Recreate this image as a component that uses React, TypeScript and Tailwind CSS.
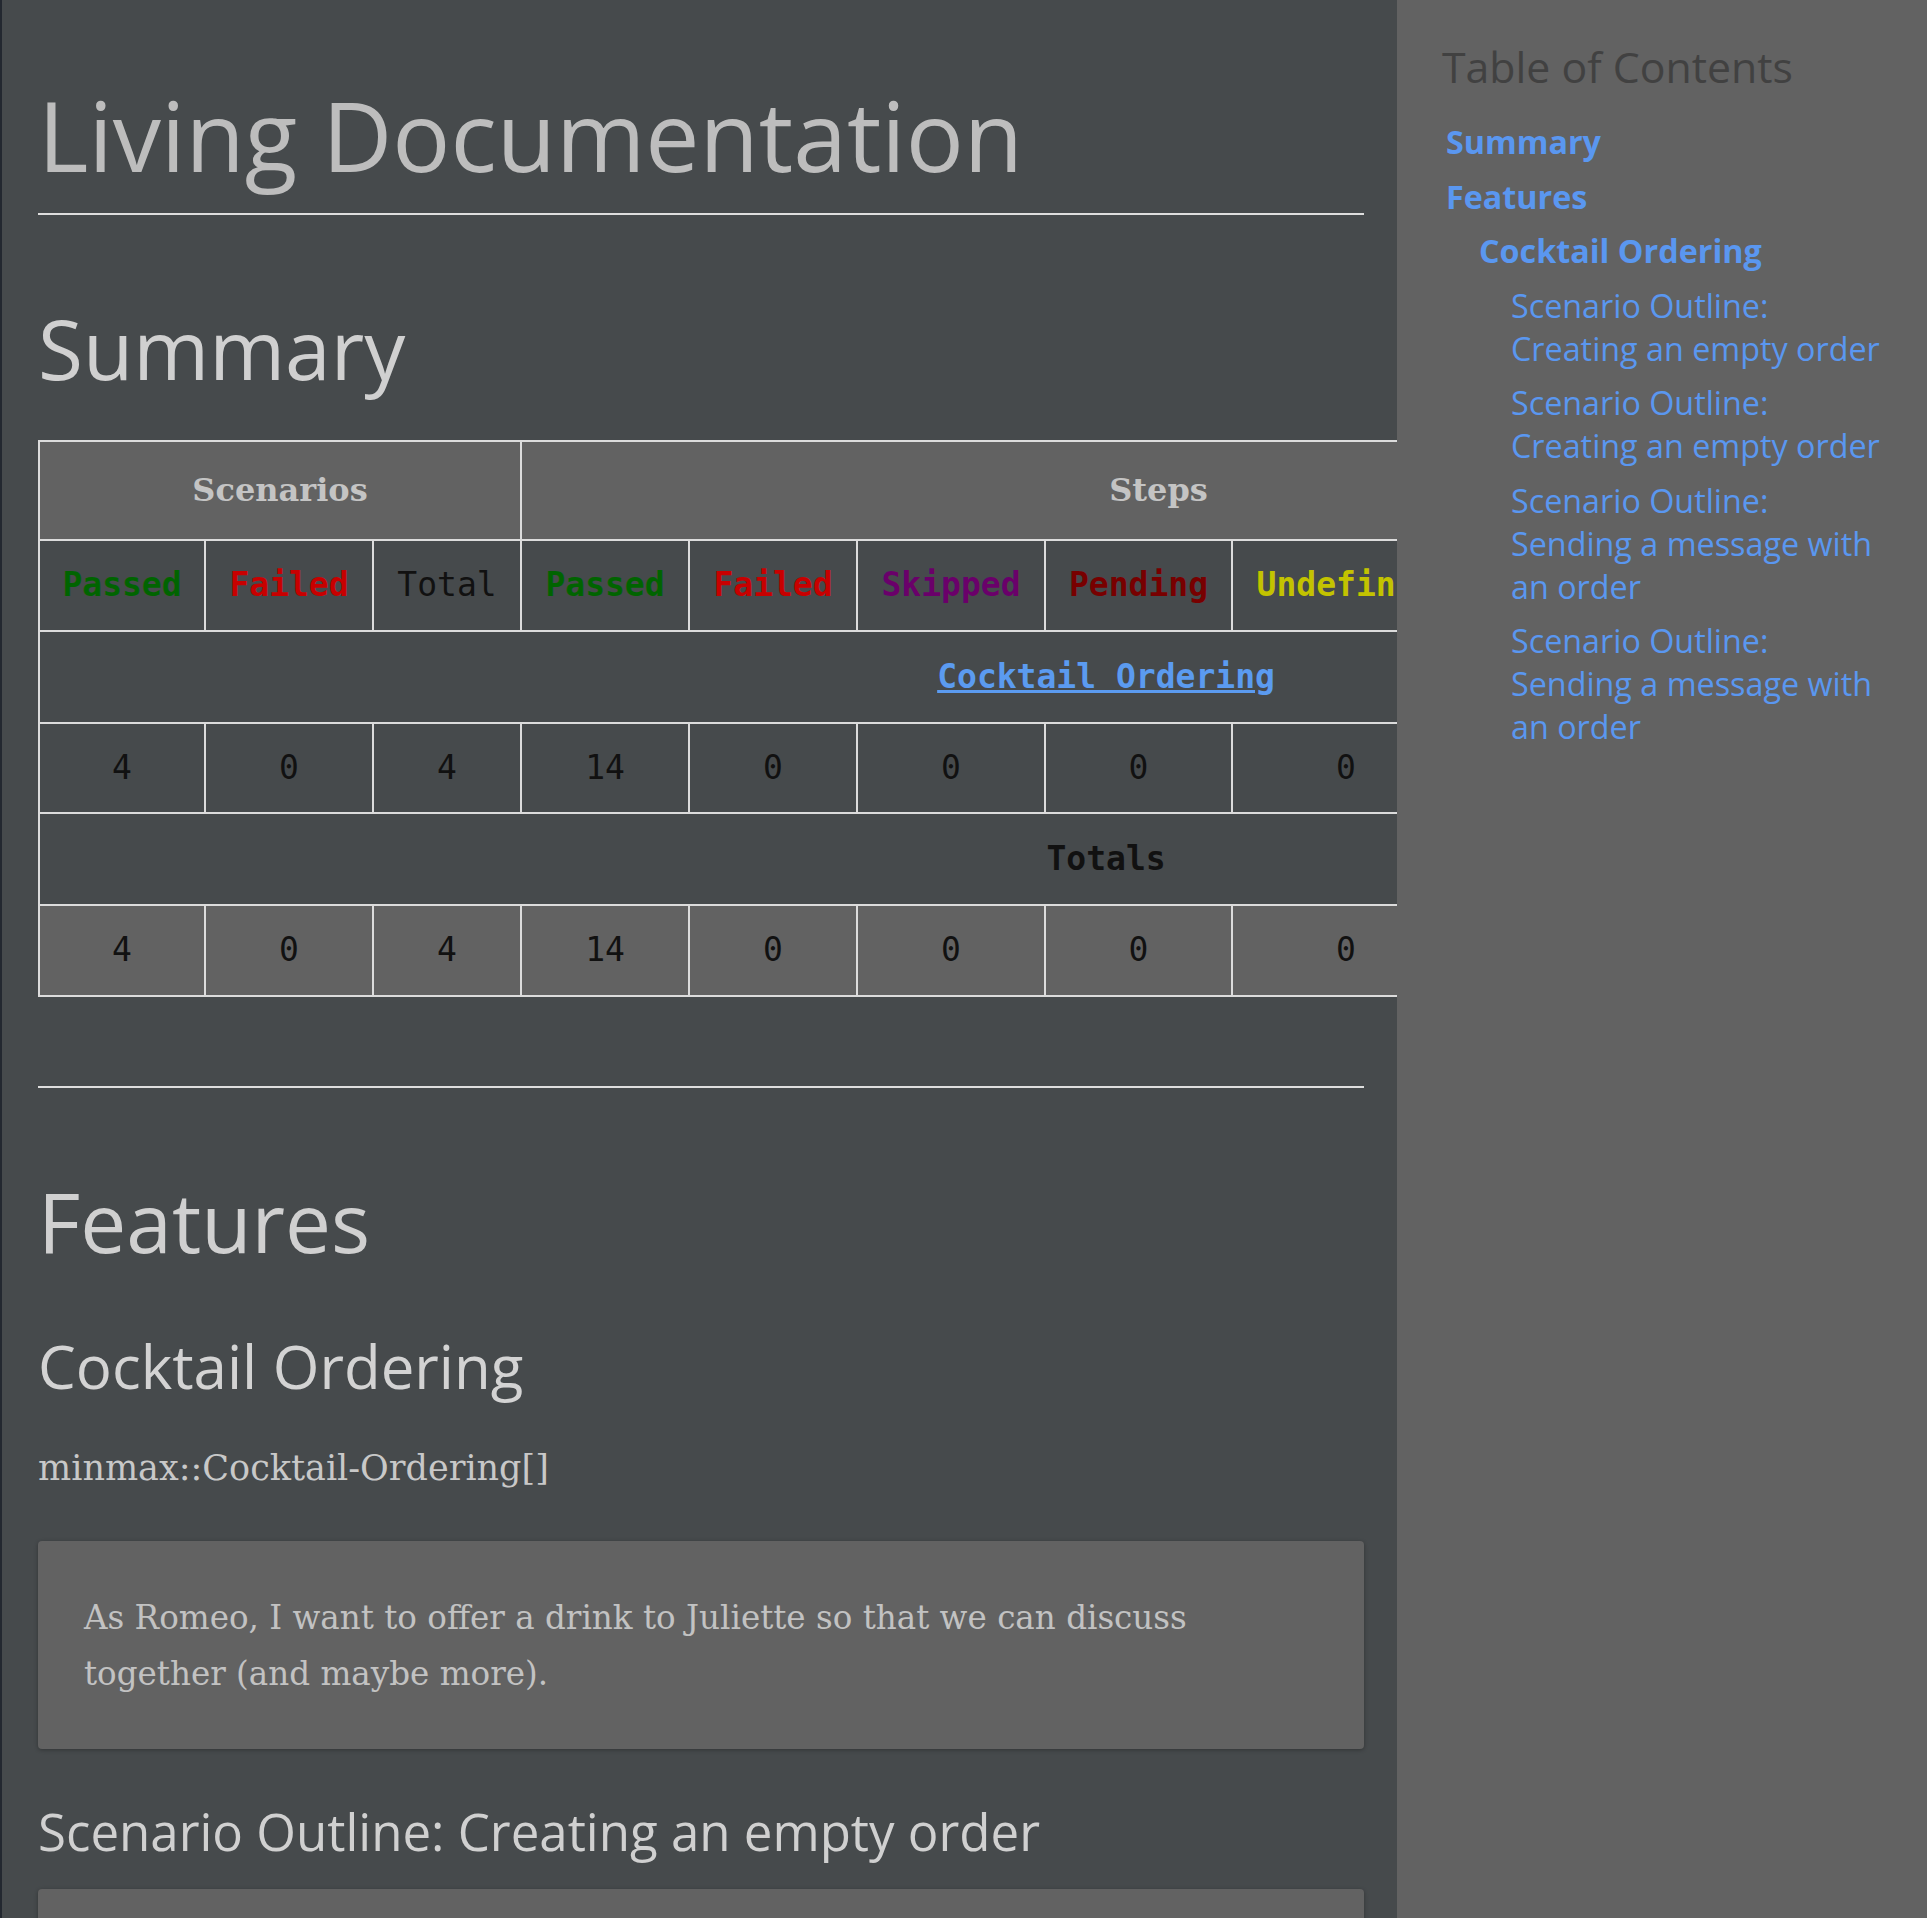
import React from 'react';

const sans = "font-['Open_Sans',sans-serif]";
const serif = "font-['DejaVu_Serif',serif]";

const colClasses = [
  'w-[166px]',
  'w-[168px]',
  'w-[148px]',
  'w-[168px]',
  'w-[168px]',
  'w-[188px]',
  'w-[187px]',
  'w-[228px]',
  'w-[188px]',
  'w-[148px]',
  'w-[205px]',
  'w-[172px]',
];

const stepHeads = [
  { label: 'Passed', cls: 'font-bold text-[#006400]' },
  { label: 'Failed', cls: 'font-bold text-[#c80000]' },
  { label: 'Total', cls: 'font-normal text-[#111111]' },
  { label: 'Passed', cls: 'font-bold text-[#006400]' },
  { label: 'Failed', cls: 'font-bold text-[#c80000]' },
  { label: 'Skipped', cls: 'font-bold text-[#6a006a]' },
  { label: 'Pending', cls: 'font-bold text-[#780000]' },
  { label: 'Undefined', cls: 'font-bold text-[#c3c300]' },
  { label: 'Missing', cls: 'font-bold text-[#8a8a00]' },
  { label: 'Total', cls: 'font-normal text-[#111111]' },
];

const values = ['4', '0', '4', '14', '0', '0', '0', '0', '0', '14', '015ms', 'passed'];

const cell = 'border-2 border-[#dcdcdc] px-[12px] text-center align-middle';

function Rule({ className = '' }: { className?: string }) {
  return <div className={`h-[2px] bg-[#dedede] ${className}`} />;
}

function SummaryTable() {
  return (
    <table className="mt-[43px] w-[2134px] table-fixed border-collapse font-['DejaVu_Sans_Mono',monospace] text-[33px] leading-[1.6] text-[#111111]">
      <colgroup>
        {colClasses.map((c, i) => (
          <col key={i} className={c} />
        ))}
      </colgroup>
      <thead>
        <tr className="h-[99px] bg-[#626262]">
          <th colSpan={3} className={`${cell} ${serif} text-[32px] font-bold text-[#c4c4c4]`}>
            Scenarios
          </th>
          <th colSpan={7} className={`${cell} ${serif} text-[32px] font-bold text-[#c4c4c4]`}>
            Steps
          </th>
          <th rowSpan={2} className={`${cell} ${serif} text-[32px] font-bold text-[#c4c4c4]`}>
            Duration
          </th>
          <th rowSpan={2} className={`${cell} ${serif} text-[32px] font-bold text-[#c4c4c4]`}>
            Status
          </th>
        </tr>
        <tr className="h-[91px]">
          {stepHeads.map((h, i) => (
            <th key={i} className={`${cell} ${h.cls}`}>
              {h.label}
            </th>
          ))}
        </tr>
      </thead>
      <tbody>
        <tr className="h-[92px]">
          <td colSpan={12} className={cell}>
            <a href="#cocktail-ordering" className="font-bold text-[#5b9bf0] underline">
              Cocktail Ordering
            </a>
          </td>
        </tr>
        <tr className="h-[90px]">
          {values.map((v, i) => (
            <td key={i} className={cell}>
              {v}
            </td>
          ))}
        </tr>
        <tr className="h-[92px]">
          <td colSpan={12} className={`${cell} font-bold`}>
            Totals
          </td>
        </tr>
        <tr className="h-[91px] bg-[#626262]">
          {values.map((v, i) => (
            <td key={i} className={cell}>
              {v}
            </td>
          ))}
        </tr>
      </tbody>
    </table>
  );
}

function Toc() {
  const scenarios = [
    'Scenario Outline: Creating an empty order',
    'Scenario Outline: Creating an empty order',
    'Scenario Outline: Sending a message with an order',
    'Scenario Outline: Sending a message with an order',
  ];
  return (
    <aside className={`h-full w-[530px] shrink-0 bg-[#626262] pl-[45px] pr-[38px] pt-[41px] ${sans}`}>
      <div className="text-[42.8px] leading-[1.2] text-[#414141]">Table of Contents</div>
      <ul className="ml-[4px] mt-[28px] text-[32.3px] leading-[43px]">
        <li className="mt-[11.5px]">
          <a href="#summary" className="font-bold text-[#5a97f0]">
            Summary
          </a>
        </li>
        <li className="mt-[11.5px]">
          <a href="#features" className="font-bold text-[#5a97f0]">
            Features
          </a>
          <ul className="pl-[33px]">
            <li className="mt-[11.5px]">
              <a href="#cocktail-ordering" className="font-bold text-[#5a97f0]">
                Cocktail Ordering
              </a>
              <ul className="pl-[32px]">
                {scenarios.map((s, i) => (
                  <li key={i} className="mt-[11.5px]">
                    <a href="#" className="text-[#5a97f0]">
                      {s}
                    </a>
                  </li>
                ))}
              </ul>
            </li>
          </ul>
        </li>
      </ul>
    </aside>
  );
}

export default function App() {
  return (
    <div className="flex h-screen w-full overflow-hidden bg-[#464a4c]">
      <main className="min-w-0 flex-1 overflow-hidden border-l-2 border-[#232830] pl-[36px] pr-[33px] pt-[77px]">
        <h1 className={`${sans} text-[96.6px] font-normal leading-[1.2] text-[#bdbdbd]`}>
          Living Documentation
        </h1>
        <Rule className="mt-[20px]" />

        <h2 id="summary" className={`${sans} mt-[84px] text-[82px] font-normal leading-[1.2] text-[#d0d0d0]`}>
          Summary
        </h2>
        <SummaryTable />

        <Rule className="mt-[89px]" />

        <h2 id="features" className={`${sans} mt-[84px] text-[82px] font-normal leading-[1.2] text-[#d0d0d0]`}>
          Features
        </h2>
        <h3 id="cocktail-ordering" className={`${sans} mt-[59px] text-[60px] font-normal leading-[1.2] text-[#d3d3d3]`}>
          Cocktail Ordering
        </h3>
        <p className={`${serif} mt-[38px] text-[35px] leading-[56px] text-[#c8c8c8]`}>
          minmax::Cocktail-Ordering[]
        </p>
        <div className="mt-[45px] rounded-[4px] bg-[#626262] px-[46px] pb-[47px] pt-[49px] shadow-[0_1px_4px_rgba(0,0,0,0.3)]">
          <p className={`${serif} text-[32.6px] leading-[56px] text-[#c2c2c2]`}>
            As Romeo, I want to offer a drink to Juliette so that we can discuss together (and maybe more).
          </p>
        </div>

        <h4 className={`${sans} mt-[52px] text-[51px] font-normal leading-[1.2] text-[#d0d0d0]`}>
          Scenario Outline: Creating an empty order
        </h4>
        <div className="mt-[27px] h-[240px] rounded-[4px] bg-[#626262] shadow-[0_1px_4px_rgba(0,0,0,0.3)]" />
      </main>
      <Toc />
    </div>
  );
}
